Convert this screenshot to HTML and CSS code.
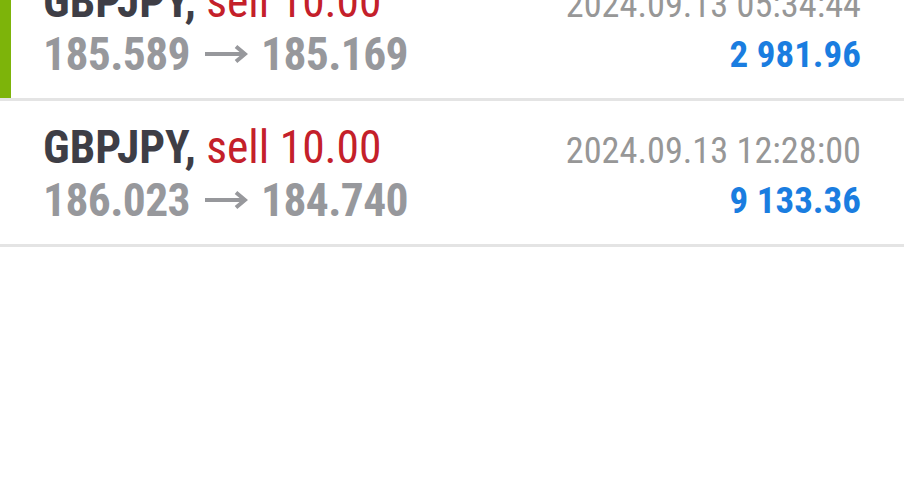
FILE: index.html
```html
<!DOCTYPE html>
<html lang="en">
<head>
	<meta charset="UTF-8">
	<title>History - Deals</title>
	<link rel="stylesheet" href="styles.css">
</head>
<body>
	<div id="dealList">
		<div class="deal active">
			<div class="dealLeft">
				<div class="dealTitle">GBPJPY, <span class="sell">sell 10.00</span></div>
				<div class="dealPrices">185.589<svg class="arrow" viewBox="0 0 44 20"><path d="M1 10H41M32 2.5L41 10L32 17.5"/></svg>185.169</div>
			</div>
			<div class="dealRight">
				<div class="dealTime">2024.09.13 05:34:44</div>
				<div class="dealProfit">2 981.96</div>
			</div>
		</div>
		<div class="deal">
			<div class="dealLeft">
				<div class="dealTitle">GBPJPY, <span class="sell">sell 10.00</span></div>
				<div class="dealPrices">186.023<svg class="arrow" viewBox="0 0 44 20"><path d="M1 10H41M32 2.5L41 10L32 17.5"/></svg>184.740</div>
			</div>
			<div class="dealRight">
				<div class="dealTime">2024.09.13 12:28:00</div>
				<div class="dealProfit">9 133.36</div>
			</div>
		</div>
	</div>
</body>
</html>
```

FILE: styles.css
```css
body {
	margin: 0;
	background-color: #fff;
	font-family: "Roboto Condensed", Roboto, sans-serif;
	font-stretch: condensed;
}
#dealList {
	margin-top: -45px;
}
.deal {
	display: flex;
	justify-content: space-between;
	box-sizing: border-box;
	height: 146px;
	padding: 20px 43px 0 43px;
	border-bottom: 3px solid #e4e4e4;
}
.deal.active {
	box-shadow: inset 11px 0 0 #7db40a;
}
.dealTitle {
	font-size: 45.5px;
	line-height: 53px;
	font-weight: bold;
	color: #3e3e46;
}
.sell {
	font-weight: normal;
	color: #c4202a;
}
.dealPrices {
	font-size: 45.5px;
	line-height: 53px;
	font-weight: bold;
	letter-spacing: -0.6px;
	color: #97989c;
}
.arrow {
	width: 44px;
	height: 20px;
	margin: 0 13px 0 14px;
	vertical-align: 6px;
	fill: none;
	stroke: #97989c;
	stroke-width: 4;
}
.dealRight {
	padding-top: 5px;
	text-align: right;
}
.dealTime {
	font-size: 36.3px;
	line-height: 50px;
	color: #979797;
}
.dealProfit {
	font-size: 37px;
	line-height: 50px;
	font-weight: bold;
	color: #1a7de0;
}
```
